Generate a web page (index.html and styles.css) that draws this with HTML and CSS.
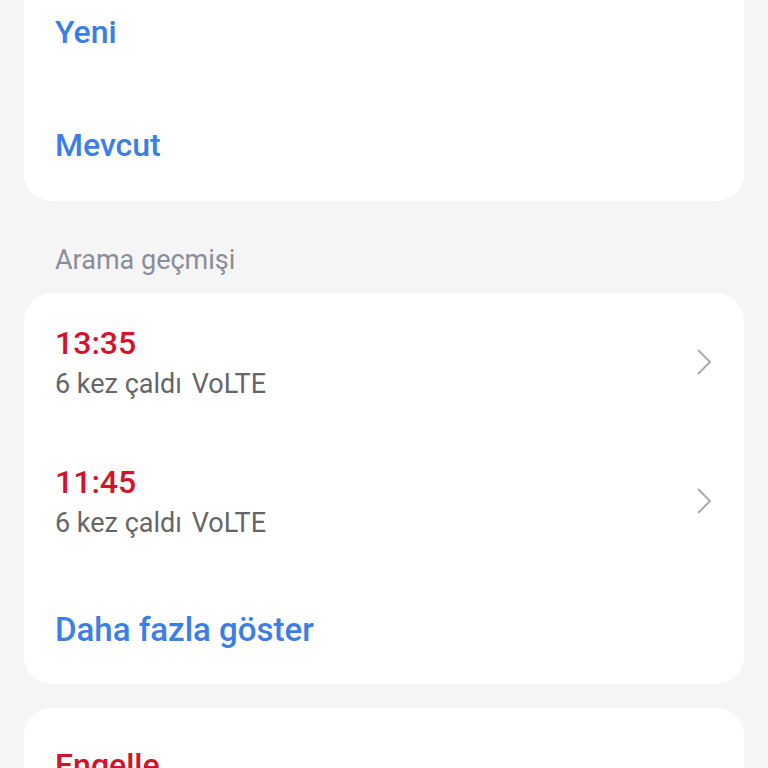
FILE: index.html
```html
<!DOCTYPE html>
<html lang="tr">
<head>
  <meta charset="UTF-8">
  <title>Arama geçmişi</title>
  <link rel="stylesheet" href="styles.css">
</head>
<body>

  <div class="page">
    <div class="card">
      <div class="row action blue">Yeni</div>
      <div class="row action blue">Mevcut</div>
    </div>

    <div class="section-label">Arama geçmişi</div>

    <div class="card">
      <div class="row call">
        <div class="call-text">
          <div class="call-time">13:35</div>
          <div class="call-info">6 kez çaldı <span class="tag">VoLTE</span></div>
        </div>
        <svg class="chevron" width="16" height="28" viewBox="0 0 16 28">
          <polyline points="2,2 14,14 2,26" fill="none" stroke="#ababab" stroke-width="2"/>
        </svg>
      </div>
      <div class="row call">
        <div class="call-text">
          <div class="call-time">11:45</div>
          <div class="call-info">6 kez çaldı <span class="tag">VoLTE</span></div>
        </div>
        <svg class="chevron" width="16" height="28" viewBox="0 0 16 28">
          <polyline points="2,2 14,14 2,26" fill="none" stroke="#ababab" stroke-width="2"/>
        </svg>
      </div>
      <div class="row action blue more">Daha fazla göster</div>
    </div>

    <div class="card">
      <div class="row action red">Engelle</div>
    </div>
  </div>

</body>
</html>
```

FILE: styles.css
```css
body {
  font-family: Roboto, "Noto Sans", sans-serif;
  background-color: #f5f5f5;
  margin: 0;
}

/* list is scrolled a little, first card starts above the window */
.page {
  margin-top: -25px;
  padding: 0 24px;
}

.card {
  background: white;
  border-radius: 28px;
  padding: 0 31px;
  margin-bottom: 24px;
}

.row {
  display: flex;
  align-items: center;
}

.action {
  height: 113px;
  font-size: 32px;
  font-weight: 500;
  line-height: 40px;
}

.action.more {
  height: auto;
  padding: 39px 0 34px;
  font-size: 33px;
}

.blue {
  color: #3b7ee6;
}

.red {
  color: #d3132b;
}

.section-label {
  font-size: 27px;
  line-height: 36px;
  color: #8b8d9c;
  margin: 41px 0 15px 31px;
}

.call {
  height: 139px;
  justify-content: space-between;
}

.call-text {
  padding-top: 2px;
}

.call-time {
  font-size: 32px;
  font-weight: 500;
  line-height: 40px;
  color: #d3132b;
}

.call-info {
  font-size: 27px;
  line-height: 40px;
  color: #666666;
  margin-top: 1px;
}

.tag {
  margin-left: 3px;
}

.chevron {
  margin-top: -2px;
  margin-right: 1px;
}
```
